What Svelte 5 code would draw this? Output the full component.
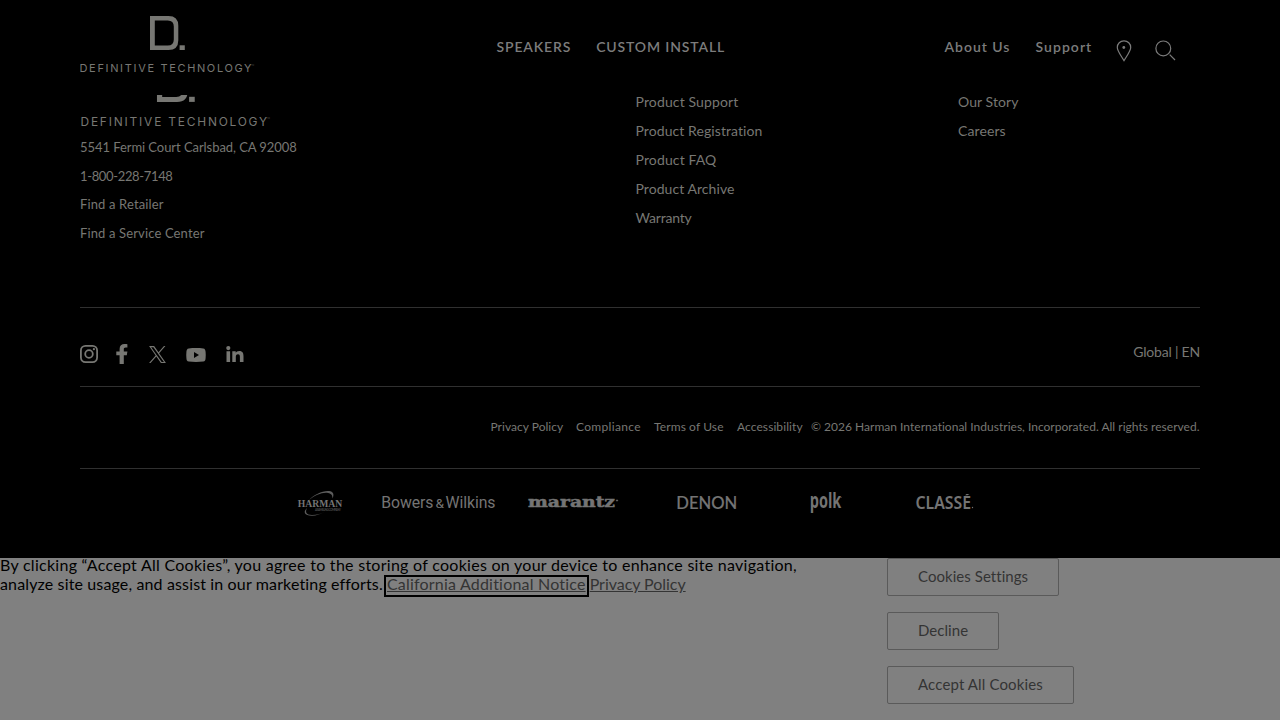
<script>
	// each link is [label, letter spacing in px]
	const contact = [
		['5541 Fermi Court Carlsbad, CA 92008', -0.06],
		['1-800-228-7148', -0.35],
		['Find a Retailer', 0.14],
		['Find a Service Center', 0.14]
	];

	const support = [
		['Product Support', 0.13],
		['Product Registration', 0.08],
		['Product FAQ', 0.13],
		['Product Archive', 0.06],
		['Warranty', -0.2]
	];

	const company = [
		['Our Story', 0.08],
		['Careers', 0.1]
	];

	const legal = [
		['Privacy Policy', 0.02, 72.5],
		['Compliance', 0.33, 65],
		['Terms of Use', 0.11, 70],
		['Accessibility', 0.08, 66]
	];
</script>

{#snippet logo(width)}
	<svg class="logo" {width} viewBox="0 0 176 58">
		<path
			fill-rule="evenodd"
			d="M70 0h18.5q9.8 0 9.8 9.8v14.4q0 9.8-9.8 9.8H70zM74.8 4.5v25h13q6 0 6-6v-13q0-6-6-6z"
		/>
		<path d="M99.6 29.3h5.2V34h-5.2z" />
		<text x="-.5" y="56" font-size="11" textLength="74.5">DEFINITIVE</text>
		<text x="80.5" y="56" font-size="11" textLength="91">TECHNOLOGY</text>
		<text class="mark" x="171" y="49.500" font-size="2">TM</text>
	</svg>
{/snippet}

{#snippet links(items)}
	{#each items as [label, spacing]}
		<li><a href="#top" style="letter-spacing: {spacing}px">{label}</a></li>
	{/each}
{/snippet}

<div class="page">
	<header>
		<a class="brand" href="#top" aria-label="Definitive Technology">{@render logo(176)}</a>
		<nav class="primary">
			<a href="#top">SPEAKERS</a>
			<a href="#top">CUSTOM INSTALL</a>
		</nav>
		<nav class="secondary">
			<a class="about" href="#top">About Us</a>
			<a class="help" href="#top">Support</a>
			<svg class="pin" width="16" height="22" viewBox="0 0 16 22">
				<path d="M8 .8c-3.900 0-6.700 2.900-6.700 6.600 0 3.300 3.200 7.400 6.700 13.200 3.500-5.800 6.700-9.900 6.700-13.200C14.700 3.700 11.900.8 8 .8z" />
				<circle class="dot" cx="7.800" cy="7.500" r="1.400" />
			</svg>
			<svg class="search" width="22" height="22" viewBox="0 0 22 22">
				<circle cx="8.300" cy="8.400" r="7.400" />
				<path d="M14.700 14.700l5.300 5.300" />
			</svg>
		</nav>
	</header>

	<footer>
		<div class="top">
			<div class="contact">
				{@render logo(191)}
				<ul>{@render links(contact)}</ul>
			</div>
			<ul class="support">{@render links(support)}</ul>
			<ul class="company">{@render links(company)}</ul>
		</div>

		<div class="social">
			<svg width="18" height="18" viewBox="0 0 18 18">
				<rect class="ring" x=".9" y=".9" width="16.200" height="16.200" rx="4.600" />
				<circle class="ring" cx="9" cy="9" r="3.800" />
				<circle cx="13.900" cy="4.200" r="1.100" />
			</svg>
			<svg class="facebook" width="12" height="20" viewBox="0 0 12 20">
				<path d="M3.600 20v-8.700H.3V7.500h3.300V5c0-3.300 1.900-5 5-5 1.400 0 2.800.2 2.800.2v3.300H9.800C8.200 3.500 7.800 4.300 7.800 5.300v2.200h3.600l-.6 3.800h-3V20z" />
			</svg>
			<svg class="x" width="17" height="17" viewBox="0 0 24 24">
				<path d="M14.300 10.200 23.200 0h-2.100l-7.700 8.900L7.200 0H.1l9.300 13.500L.1 24h2.100l8.100-9.300L16.800 24h7.100zM11.400 13.500l-.9-1.300L3 1.600h3.200l6.100 8.600.9 1.300 7.900 11.200h-3.200z" />
			</svg>
			<svg class="youtube" width="20" height="14" viewBox="0 0 20 14">
				<path
					fill-rule="evenodd"
					d="M2.800.4C7 0 13 0 17.200.4 19 .6 19.500 2 19.600 4c.2 2 .2 4 0 6-.1 2-.6 3.400-2.400 3.600-4.200.4-10.200.4-14.400 0C1 13.400.5 12 .4 10c-.2-2-.2-4 0-6C.5 2 1 .6 2.800.4zM8 4v6l5-3z"
				/>
			</svg>
			<svg class="linkedin" width="18" height="16" viewBox="0 0 18 16">
				<circle cx="2.300" cy="2.100" r="2.100" />
				<path d="M.5 5.300h3.600V16H.5zM6.300 5.300h3.400v1.500c.5-.9 1.700-1.800 3.600-1.800 3.500 0 4.200 2.300 4.200 5.400V16h-3.600v-5c0-1.500-.2-2.800-1.900-2.800-1.700 0-2.200 1.200-2.200 2.800v5H6.300z" />
			</svg>
			<a class="region" href="#top">Global | EN</a>
		</div>

		<div class="legal">
			{#each legal as [label, spacing, width]}
				<a href="#top" style="letter-spacing: {spacing}px; width: {width}px">{label}</a>
			{/each}
			<span>© 2026 Harman International Industries, Incorporated. All rights reserved.</span>
		</div>

		<div class="brands">
			<svg class="harman" width="48" height="32" viewBox="296 487 48 32">
				<path class="arc" d="M309 500c5-6 16-10.500 21.500-8.700 3.500 1.300 3.500 4 2 7.200 0-3-1-5-4.500-5.500-6-.9-13 2.500-19 7z" />
				<path class="arc" d="M307 508c-2 4-1 7 5 7 5 0 10-1.500 14-4-5 3-10 4.700-14 4.700-8 0-9-4-5-7.700z" />
				<text x="297.800" y="507.200" font-size="9.800" textLength="44.500" lengthAdjust="spacingAndGlyphs">HARMAN</text>
				<text class="tiny" x="315" y="511.300" font-size="3" textLength="26">A SAMSUNG COMPANY</text>
			</svg>
			<svg class="bowers" width="118" height="32" viewBox="380 487 118 32">
				<text x="381.300" y="507.800" font-size="15.800" textLength="52">Bowers</text>
				<text x="435.500" y="507.800" font-size="12" textLength="8.500" lengthAdjust="spacingAndGlyphs">&amp;</text>
				<text x="445.500" y="507.800" font-size="15.800" textLength="50">Wilkins</text>
			</svg>
			<svg class="marantz" width="94" height="32" viewBox="526 487 94 32">
				<text x="528" y="507" font-size="14.500" textLength="87" lengthAdjust="spacingAndGlyphs">marantz</text>
				<circle cx="617" cy="500.500" r=".7" />
			</svg>
			<svg class="denon" width="62" height="32" viewBox="676 487 62 32">
				<text x="676.300" y="508.500" font-size="17" textLength="61" lengthAdjust="spacingAndGlyphs">DENON</text>
			</svg>
			<svg class="polk" width="36" height="38" viewBox="809 484 36 38">
				<text x="809.800" y="508" font-size="20.500" textLength="31.500" lengthAdjust="spacingAndGlyphs">polk</text>
				<circle cx="841" cy="497.500" r=".5" />
			</svg>
			<svg class="classe" width="62" height="32" viewBox="914 487 62 32">
				<text x="915.500" y="508.500" font-size="17" textLength="55.500" lengthAdjust="spacingAndGlyphs">CLASSE</text>
				<path d="M965 495.300l1.500-1.300h3l-2 1.300z" />
				<circle cx="972.500" cy="507.500" r=".7" />
			</svg>
		</div>
	</footer>

	<section class="cookies">
		<p>
			<span class="first">By clicking “Accept All Cookies”, you agree to the storing of cookies on your device to enhance site navigation,</span>
			<br />
			<span class="second">analyze site usage, and assist in our marketing efforts.</span>
			<a class="notice" href="#top">California Additional Notice</a>
			<a class="privacy" href="#top">Privacy Policy</a>
		</p>
		<div class="choices">
			<button style="width: 172px">Cookies Settings</button>
			<button style="width: 112px">Decline</button>
			<button class="accept" style="width: 187px">Accept All Cookies</button>
		</div>
	</section>
</div>

<style>
	:global(body) {
		margin: 0;
		background: #808080;
	}
	.page {
		position: relative;
		width: 1280px;
		height: 720px;
		overflow: hidden;
		font-family: Lato, sans-serif;
		font-variant-ligatures: none;
		color: #777773;
	}
	a {
		color: inherit;
		text-decoration: none;
		white-space: nowrap;
	}
	ul {
		list-style: none;
		margin: 0;
		padding: 0;
	}
	svg {
		display: block;
		flex: none;
		fill: #777773;
	}
	.logo {
		font-family: Inter, sans-serif;
		font-weight: 400;
	}
	.mark {
		fill: #4a4a48;
	}

	/* sits over the scrolled footer */
	header {
		position: absolute;
		top: 0;
		left: 0;
		z-index: 1;
		box-sizing: border-box;
		width: 100%;
		height: 95px;
		padding: 16px 80px 0;
		background: #000;
		display: flex;
		font-size: 14px;
		font-weight: 600;
		line-height: 17px;
		color: #7c7c7c;
	}
	.brand {
		width: 416.5px;
	}
	nav {
		display: flex;
		padding-top: 22px;
	}
	.primary {
		width: 448px;
		gap: 25px;
		letter-spacing: 0.85px;
	}
	.about {
		width: 91px;
		letter-spacing: 0.97px;
	}
	.help {
		width: 80.5px;
		letter-spacing: 1.05px;
	}
	.pin,
	.search {
		fill: none;
		stroke: #7c7c7c;
		stroke-width: 1.2;
		margin-top: 2px;
	}
	.search {
		margin-left: 23px;
	}
	.dot {
		fill: #7c7c7c;
		stroke: none;
	}

	footer {
		box-sizing: border-box;
		height: 558px;
		padding: 64px 80px 0;
		background: #000;
	}
	.top {
		height: 243px;
		display: flex;
		font-size: 14px;
		line-height: 29px;
	}
	.contact {
		width: 555.5px;
		font-size: 13px;
		line-height: 28.67px;
	}
	.contact .logo {
		margin: 1px 0 0 0.5px;
	}
	.contact ul {
		margin-top: 5px;
	}
	.support {
		width: 322.5px;
		padding-top: 23px;
	}
	.company {
		padding-top: 23px;
	}
	.social,
	.legal,
	.brands {
		box-sizing: border-box;
		border-top: 1px solid #303030;
		display: flex;
		align-items: center;
	}
	.social {
		height: 79px;
		padding-top: 14px;
	}
	.ring {
		fill: none;
		stroke: #777773;
		stroke-width: 1.8;
	}
	.facebook {
		margin-left: 18px;
	}
	.x {
		margin-left: 21px;
	}
	.youtube {
		margin: 2px 0 0 20px;
	}
	.linkedin {
		margin: -1px 0 0 20px;
	}
	.region {
		margin: -5px 0 0 auto;
		font-size: 14px;
		letter-spacing: -0.2px;
	}
	.legal {
		height: 82px;
		padding-bottom: 2px;
		justify-content: flex-end;
		font-size: 12px;
	}
	.legal a {
		margin-right: 13px;
	}
	.legal a:nth-last-child(2) {
		margin-right: 8px;
	}
	.legal span {
		width: 389px;
		white-space: nowrap;
		letter-spacing: 0.015px;
	}

	.brands {
		height: 90px;
		padding: 0 0 22px 216px;
	}
	.brands svg {
		fill: #747474;
	}
	.harman {
		font-family: 'Liberation Serif', serif;
		font-weight: 700;
	}
	.arc {
		fill: #5c5c5c;
	}
	.tiny {
		fill: #4a4a4a;
		font-family: Lato, sans-serif;
	}
	.bowers {
		margin-left: 36px;
		font-family: Roboto, sans-serif;
		font-weight: 400;
	}
	.marantz {
		margin-left: 28px;
		font-family: 'DejaVu Serif', serif;
		font-weight: 700;
		stroke: #747474;
		stroke-width: 0.5;
	}
	.denon {
		margin-left: 56px;
		font-family: Lato, sans-serif;
		font-weight: 500;
		stroke: #747474;
		stroke-width: 0.2;
	}
	.polk {
		margin-left: 71px;
		font-family: 'Open Sans', sans-serif;
		font-weight: 700;
	}
	.classe {
		margin-left: 69px;
		font-family: 'Noto Sans', sans-serif;
		font-weight: 600;
	}

	.cookies {
		height: 162px;
		display: flex;
		background: #808080;
		color: #000;
	}
	.cookies p {
		width: 887px;
		margin: -3px 0 0;
		font-size: 16px;
		line-height: 19px;
		white-space: nowrap;
	}
	.first {
		letter-spacing: 0.275px;
	}
	.second {
		letter-spacing: 0.14px;
	}
	.cookies a {
		color: #343434;
		text-decoration: underline;
	}
	.notice {
		display: inline-block;
		margin: 0 -1px -4px;
		padding: 0 1px 4px;
		line-height: 14px;
		outline: 2px solid #000;
		letter-spacing: 0.2px;
	}
	.privacy {
		letter-spacing: -0.04px;
	}
	.choices {
		display: flex;
		flex-direction: column;
		gap: 16px;
	}
	button {
		height: 38px;
		padding: 0 0 2px 30px;
		border: 1px solid #5a5a5a;
		border-radius: 2px;
		background: none;
		font: 15px Lato, sans-serif;
		text-align: left;
		letter-spacing: 0.05px;
		color: #343434;
	}
	.accept {
		letter-spacing: 0.13px;
	}
</style>
